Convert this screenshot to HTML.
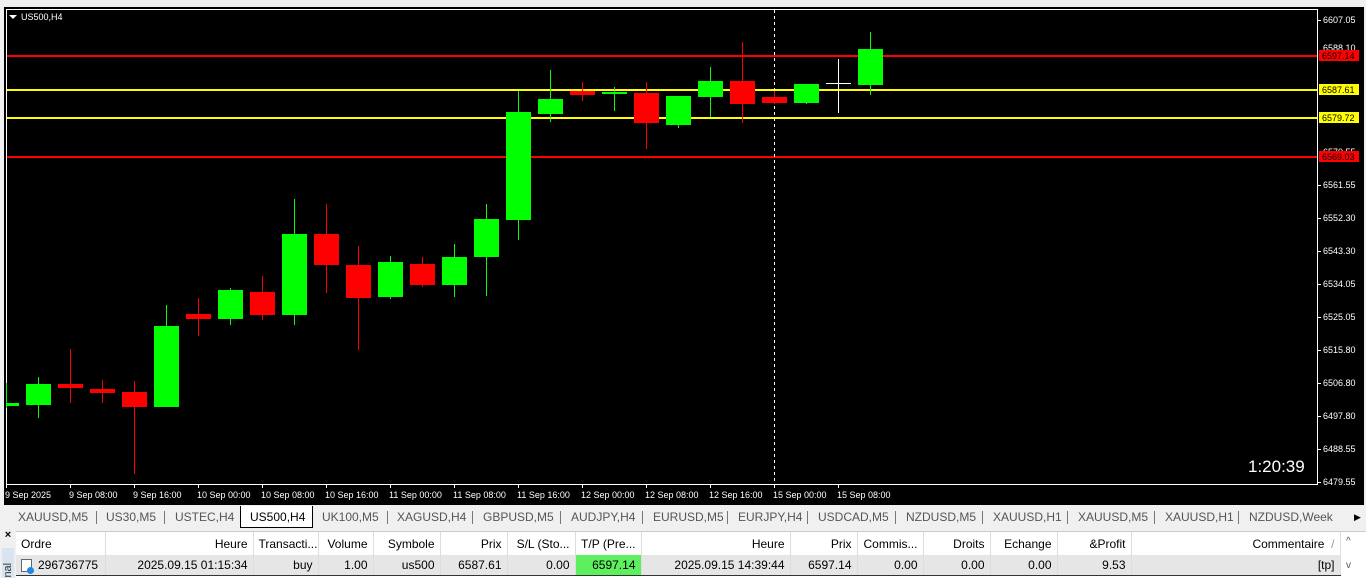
<!DOCTYPE html>
<html><head><meta charset="utf-8"><style>
*{margin:0;padding:0;box-sizing:border-box}
body{width:1366px;height:578px;background:#f0f0f0;font-family:"Liberation Sans",sans-serif;position:relative;overflow:hidden}
.abs{position:absolute}
.tabs{left:4px;top:507px;width:1360px;height:21px;font-size:12px;color:#555}
.tab{position:absolute;top:3px}
.sep{position:absolute;top:4px;width:1px;height:13px;background:#777}
table{border-collapse:collapse;font-size:12px;position:absolute;left:16px;top:532px;table-layout:fixed;width:1324px}
td{height:23px;padding:0 5px;border-right:1px solid #ddd;white-space:nowrap;overflow:hidden;color:#000}
tr.h td{background:#fff}
tr.r td{background:#e6e6e6;height:20px;border-bottom:1px solid #333}
.R{text-align:right}
</style></head><body>
<svg class="abs" style="left:0;top:0" width="1366" height="506">
<rect x="4" y="7" width="1360" height="498" fill="#000"/>
<rect x="6.5" y="9.5" width="1311" height="475" fill="none" stroke="#fff" stroke-width="1"/>
<g font-family="Liberation Sans" font-size="9" fill="#fff">
<polygon points="9,15 17,15 13,19" fill="#fff"/>
<text x="21" y="20">US500,H4</text>
</g>
<g stroke="#fff" stroke-width="1">
<line x1="1317" y1="20.5" x2="1321" y2="20.5"/><line x1="1317" y1="185.5" x2="1321" y2="185.5"/><line x1="1317" y1="218.5" x2="1321" y2="218.5"/><line x1="1317" y1="251.5" x2="1321" y2="251.5"/><line x1="1317" y1="284.5" x2="1321" y2="284.5"/><line x1="1317" y1="317.5" x2="1321" y2="317.5"/><line x1="1317" y1="350.5" x2="1321" y2="350.5"/><line x1="1317" y1="383.5" x2="1321" y2="383.5"/><line x1="1317" y1="416.5" x2="1321" y2="416.5"/><line x1="1317" y1="449.5" x2="1321" y2="449.5"/><line x1="1317" y1="482.5" x2="1321" y2="482.5"/>
</g>
<g font-family="Liberation Sans" font-size="9" fill="#fff">
<text x="1323" y="23">6607.05</text><text x="1323" y="51">6588.10</text><text x="1323" y="155">6570.55</text><text x="1323" y="188">6561.55</text><text x="1323" y="221">6552.30</text><text x="1323" y="254">6543.30</text><text x="1323" y="287">6534.05</text><text x="1323" y="320">6525.05</text><text x="1323" y="353">6515.80</text><text x="1323" y="386">6506.80</text><text x="1323" y="419">6497.80</text><text x="1323" y="452">6488.55</text><text x="1323" y="485">6479.55</text>
</g>
<rect x="7" y="55" width="1310" height="2" fill="#f00"/>
<rect x="7" y="89" width="1310" height="2" fill="#ff0"/>
<rect x="7" y="117" width="1310" height="2" fill="#ff0"/>
<rect x="7" y="156" width="1310" height="2" fill="#f00"/>
<rect x="1319" y="50" width="40" height="11" fill="#f00"/><text x="1322" y="59" font-family="Liberation Sans" font-size="9" fill="#000">6597.14</text>
<rect x="1319" y="84" width="40" height="11" fill="#ff0"/><text x="1322" y="93" font-family="Liberation Sans" font-size="9" fill="#000">6587.61</text>
<rect x="1319" y="112" width="40" height="11" fill="#ff0"/><text x="1322" y="121" font-family="Liberation Sans" font-size="9" fill="#000">6579.72</text>
<rect x="1319" y="151" width="40" height="11" fill="#f00"/><text x="1322" y="160" font-family="Liberation Sans" font-size="9" fill="#000">6569.03</text>
<line x1="774.5" y1="10" x2="774.5" y2="484" stroke="#fff" stroke-dasharray="3,3"/>
<g id="c">
<rect x="6" y="383" width="1" height="25" fill="#0f0"/><rect x="6" y="403" width="13" height="3" fill="#0f0"/>
<rect x="38" y="377" width="1" height="41" fill="#0f0"/><rect x="26" y="384" width="25" height="21" fill="#0f0"/>
<rect x="70" y="349" width="1" height="54" fill="#f00"/><rect x="58" y="384" width="25" height="4" fill="#f00"/>
<rect x="102" y="380" width="1" height="23" fill="#f00"/><rect x="90" y="389" width="25" height="4" fill="#f00"/>
<rect x="134" y="381" width="1" height="93" fill="#f00"/><rect x="122" y="392" width="25" height="15" fill="#f00"/>
<rect x="166" y="305" width="1" height="102" fill="#0f0"/><rect x="154" y="326" width="25" height="81" fill="#0f0"/>
<rect x="198" y="298" width="1" height="38" fill="#f00"/><rect x="186" y="314" width="25" height="5" fill="#f00"/>
<rect x="230" y="288" width="1" height="37" fill="#0f0"/><rect x="218" y="290" width="25" height="29" fill="#0f0"/>
<rect x="262" y="276" width="1" height="44" fill="#f00"/><rect x="250" y="292" width="25" height="23" fill="#f00"/>
<rect x="294" y="199" width="1" height="126" fill="#0f0"/><rect x="282" y="234" width="25" height="81" fill="#0f0"/>
<rect x="326" y="204" width="1" height="89" fill="#f00"/><rect x="314" y="234" width="25" height="31" fill="#f00"/>
<rect x="358" y="246" width="1" height="104" fill="#f00"/><rect x="346" y="265" width="25" height="33" fill="#f00"/>
<rect x="390" y="256" width="1" height="43" fill="#0f0"/><rect x="378" y="262" width="25" height="35" fill="#0f0"/>
<rect x="422" y="257" width="1" height="30" fill="#f00"/><rect x="410" y="264" width="25" height="21" fill="#f00"/>
<rect x="454" y="244" width="1" height="53" fill="#0f0"/><rect x="442" y="257" width="25" height="28" fill="#0f0"/>
<rect x="486" y="204" width="1" height="92" fill="#0f0"/><rect x="474" y="219" width="25" height="38" fill="#0f0"/>
<rect x="518" y="91" width="1" height="149" fill="#0f0"/><rect x="506" y="112" width="25" height="108" fill="#0f0"/>
<rect x="550" y="70" width="1" height="52" fill="#0f0"/><rect x="538" y="99" width="25" height="15" fill="#0f0"/>
<rect x="582" y="82" width="1" height="19" fill="#f00"/><rect x="570" y="91" width="25" height="4" fill="#f00"/>
<rect x="614" y="87" width="1" height="24" fill="#0f0"/><rect x="602" y="92" width="25" height="2" fill="#0f0"/>
<rect x="646" y="82" width="1" height="67" fill="#f00"/><rect x="634" y="93" width="25" height="30" fill="#f00"/>
<rect x="678" y="96" width="1" height="32" fill="#0f0"/><rect x="666" y="96" width="25" height="29" fill="#0f0"/>
<rect x="710" y="67" width="1" height="50" fill="#0f0"/><rect x="698" y="81" width="25" height="16" fill="#0f0"/>
<rect x="742" y="42" width="1" height="81" fill="#f00"/><rect x="730" y="81" width="25" height="23" fill="#f00"/>
<rect x="774" y="91" width="1" height="13" fill="#f00"/><rect x="762" y="97" width="25" height="6" fill="#f00"/>
<rect x="806" y="84" width="1" height="20" fill="#0f0"/><rect x="794" y="84" width="25" height="19" fill="#0f0"/>
<rect x="838" y="59" width="1" height="54" fill="#fff"/><rect x="826" y="83" width="25" height="1" fill="#fff"/>
<rect x="870" y="32" width="1" height="63" fill="#0f0"/><rect x="858" y="49" width="25" height="36" fill="#0f0"/>
</g>
<text x="1248" y="472" font-family="Liberation Sans" font-size="17" fill="#fff">1:20:39</text>
<g stroke="#fff"><line x1="6.5" y1="484" x2="6.5" y2="488"/><line x1="70.5" y1="484" x2="70.5" y2="488"/><line x1="134.5" y1="484" x2="134.5" y2="488"/><line x1="198.5" y1="484" x2="198.5" y2="488"/><line x1="262.5" y1="484" x2="262.5" y2="488"/><line x1="326.5" y1="484" x2="326.5" y2="488"/><line x1="390.5" y1="484" x2="390.5" y2="488"/><line x1="454.5" y1="484" x2="454.5" y2="488"/><line x1="518.5" y1="484" x2="518.5" y2="488"/><line x1="582.5" y1="484" x2="582.5" y2="488"/><line x1="646.5" y1="484" x2="646.5" y2="488"/><line x1="710.5" y1="484" x2="710.5" y2="488"/><line x1="774.5" y1="484" x2="774.5" y2="488"/><line x1="838.5" y1="484" x2="838.5" y2="488"/></g>
<g font-family="Liberation Sans" font-size="9" fill="#fff">
<text x="5" y="498">9 Sep 2025</text><text x="69" y="498">9 Sep 08:00</text><text x="133" y="498">9 Sep 16:00</text><text x="197" y="498">10 Sep 00:00</text><text x="261" y="498">10 Sep 08:00</text><text x="325" y="498">10 Sep 16:00</text><text x="389" y="498">11 Sep 00:00</text><text x="453" y="498">11 Sep 08:00</text><text x="517" y="498">11 Sep 16:00</text><text x="581" y="498">12 Sep 00:00</text><text x="645" y="498">12 Sep 08:00</text><text x="709" y="498">12 Sep 16:00</text><text x="773" y="498">15 Sep 00:00</text><text x="837" y="498">15 Sep 08:00</text>
</g>
</svg>
<div class="abs tabs">
<span class="tab" style="left:14px">XAUUSD,M5</span><i class="sep" style="left:92px"></i>
<span class="tab" style="left:102px">US30,M5</span><i class="sep" style="left:160px"></i>
<span class="tab" style="left:171px">USTEC,H4</span>
<div style="position:absolute;left:236px;top:-1px;width:73px;height:22px;background:#fff;border:1px solid #000;border-top:none"></div>
<span class="tab" style="left:246px;color:#000">US500,H4</span>
<span class="tab" style="left:318px">UK100,M5</span><i class="sep" style="left:383px"></i>
<span class="tab" style="left:393px">XAGUSD,H4</span><i class="sep" style="left:468px"></i>
<span class="tab" style="left:479px">GBPUSD,M5</span><i class="sep" style="left:556px"></i>
<span class="tab" style="left:567px">AUDJPY,H4</span><i class="sep" style="left:638px"></i>
<span class="tab" style="left:649px">EURUSD,M5</span><i class="sep" style="left:723px"></i>
<span class="tab" style="left:734px">EURJPY,H4</span><i class="sep" style="left:803px"></i>
<span class="tab" style="left:814px">USDCAD,M5</span><i class="sep" style="left:891px"></i>
<span class="tab" style="left:902px">NZDUSD,M5</span><i class="sep" style="left:978px"></i>
<span class="tab" style="left:989px">XAUUSD,H1</span><i class="sep" style="left:1063px"></i>
<span class="tab" style="left:1074px">XAUUSD,M5</span><i class="sep" style="left:1150px"></i>
<span class="tab" style="left:1161px">XAUUSD,H1</span><i class="sep" style="left:1234px"></i>
<span class="tab" style="left:1245px">NZDUSD,Week</span>
<span class="tab" style="left:1350px;color:#000;font-size:9px;top:5px">▶</span>
</div>
<div class="abs" style="left:0;top:529px;width:16px;height:49px;background:#f0f0f0;font-size:11px;font-weight:bold;text-align:center">×</div>
<div class="abs" style="left:2px;top:548px;width:12px;height:30px;background:#d8e4f0;font-size:11px;color:#333;overflow:hidden"><div style="transform:rotate(-90deg);transform-origin:left top;position:absolute;left:0;top:32px;white-space:nowrap">inal</div></div>
<div class="abs" style="left:16px;top:531px;width:1350px;height:47px;background:#fff;border-top:1px solid #ccc"></div>
<table>
<colgroup><col style="width:89px"><col style="width:148px"><col style="width:65px"><col style="width:55px"><col style="width:67px"><col style="width:67px"><col style="width:68px"><col style="width:66px"><col style="width:149px"><col style="width:67px"><col style="width:66px"><col style="width:67px"><col style="width:67px"><col style="width:74px"><col style="width:209px"></colgroup>
<tr class="h"><td>Ordre</td><td class="R">Heure</td><td>Transacti...</td><td class="R">Volume</td><td class="R">Symbole</td><td class="R">Prix</td><td class="R">S/L (Sto...</td><td class="R">T/P (Pre...</td><td class="R">Heure</td><td class="R">Prix</td><td class="R">Commis...</td><td class="R">Droits</td><td class="R">Echange</td><td class="R">&amp;Profit</td><td class="R">Commentaire &nbsp;<span style="color:#999">/</span></td></tr>
<tr class="r"><td><span style="display:inline-block;width:11px;height:13px;border:1px solid #666;background:#fff;vertical-align:middle;margin-right:6px;position:relative"><i style="position:absolute;right:-3px;bottom:-3px;width:7px;height:7px;border-radius:50%;background:#1e88e5"></i></span>296736775</td><td class="R">2025.09.15 01:15:34</td><td class="R">buy</td><td class="R">1.00</td><td class="R">us500</td><td class="R">6587.61</td><td class="R">0.00</td><td class="R" style="background:#5eef5e">6597.14</td><td class="R">2025.09.15 14:39:44</td><td class="R">6597.14</td><td class="R">0.00</td><td class="R">0.00</td><td class="R">0.00</td><td class="R">9.53</td><td class="R">[tp]</td></tr>
</table>
<div class="abs" style="left:1346px;top:536px;font-size:10px;color:#555">^</div>
<div class="abs" style="left:1346px;top:560px;font-size:10px;color:#555">v</div>
</body></html>
